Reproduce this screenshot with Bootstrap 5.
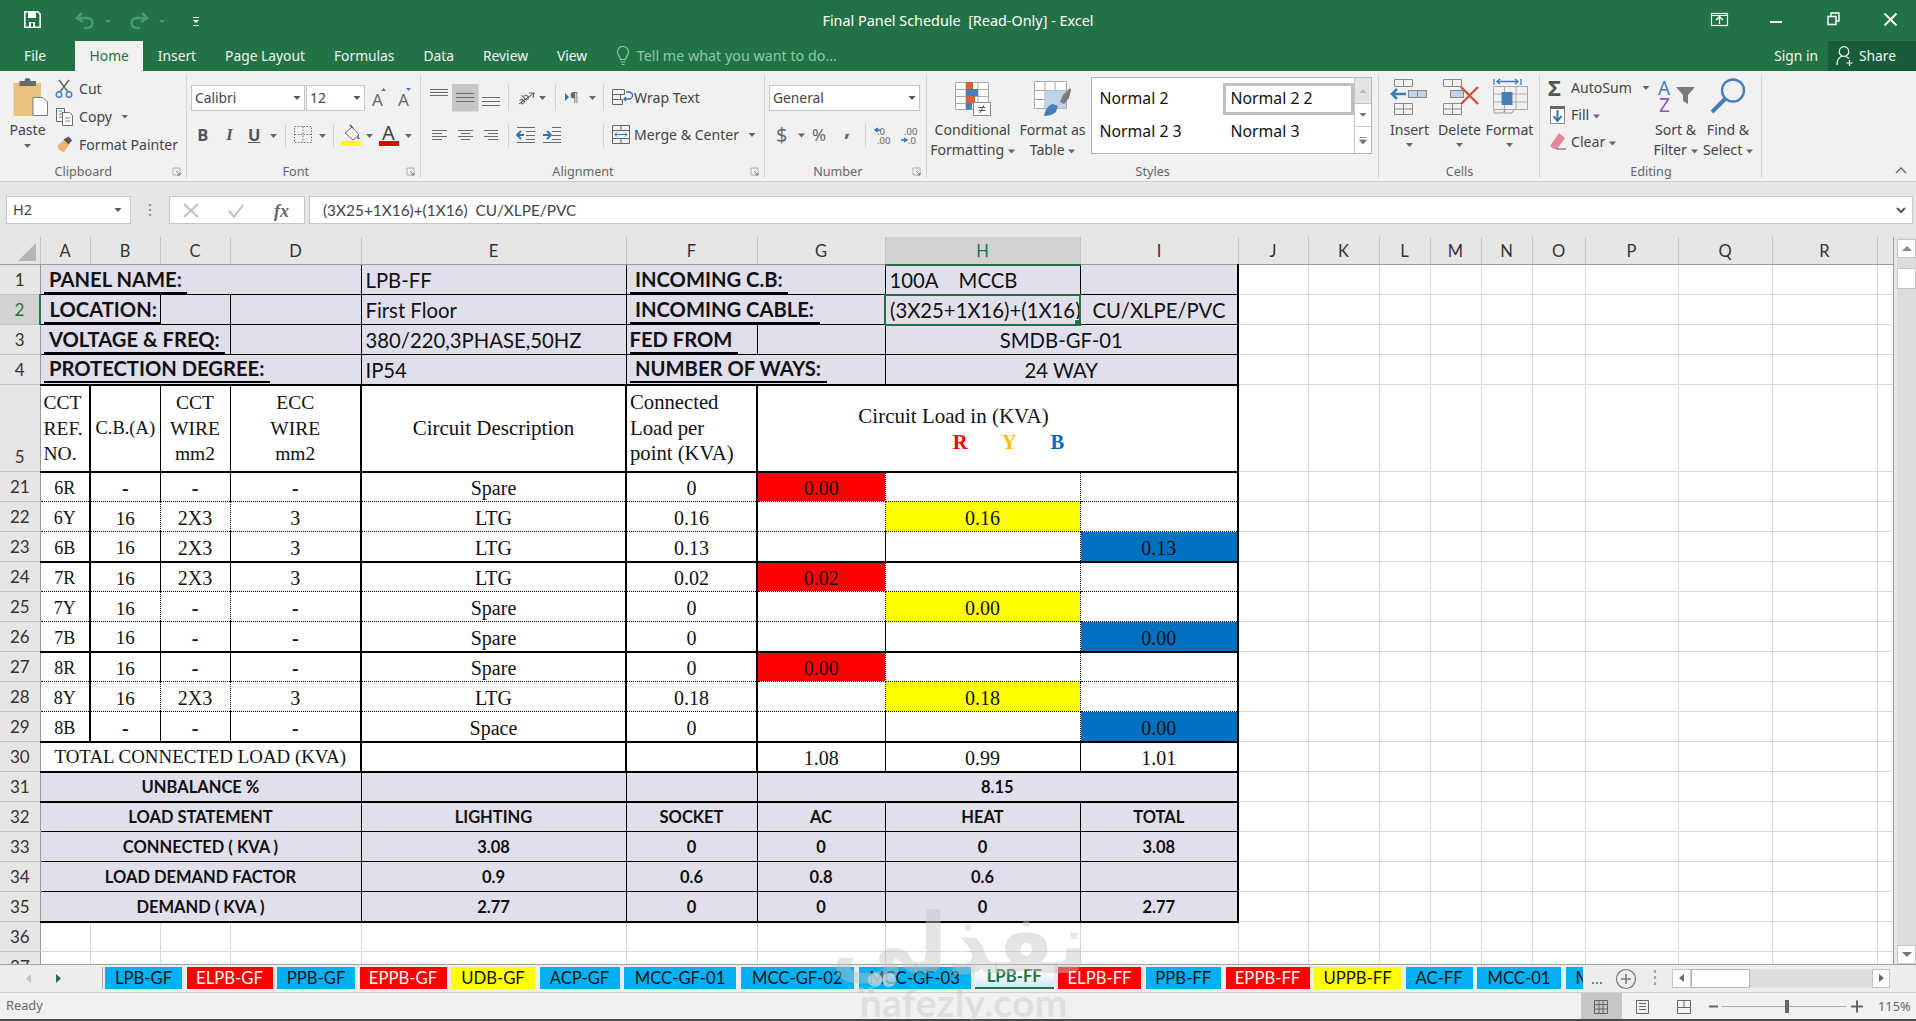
<!DOCTYPE html>
<html lang="en">
<head>
<meta charset="utf-8">
<title>Final Panel Schedule</title>
<link href="https://cdn.jsdelivr.net/npm/bootstrap@5.3.0/dist/css/bootstrap.min.css" rel="stylesheet">
<style>
html,body{height:100%;overflow:hidden;background:#f1f1f1}
body{font-family:"Noto Sans","Open Sans",sans-serif;font-size:14.1px;color:#444;position:relative;width:1916px;height:1021px}
svg{display:block;flex:none}
.xl-title{height:41px;background:#217346;color:#fff;font-size:14.4px}
.xl-side{flex:1 1 0}
.xl-tabs{height:30px;background:#217346;color:#f4f4f4;padding-left:24px;line-height:30px;font-size:13.8px}
.xl-tab{padding:0 14.5px}
.xl-tab.first{padding:0 29px 0 0}
.xl-tab.on{background:#f1f1f1;color:#217346}
.xl-tell{color:#8ec9a7;margin-left:15px;gap:8px;font-size:14.3px}
.xl-signin{margin-right:10px}
.xl-share{background:#185c37;width:88px;height:30px;padding-left:8px;gap:5px;color:#f4f4f4}
.ribbon{height:111px;background:#f1f1f1;border-bottom:1px solid #cfcfcf}
.rgroup{position:relative;height:110px;flex:none}
.rgroup::after{content:"";position:absolute;right:0;top:4px;bottom:3px;width:1px;background:#d4d4d4}
.rbody{height:92px;padding-top:4px}
.rlabel{height:18px;color:#666;font-size:12.6px;line-height:18px}
.rlabel span{flex:1 1 0;text-align:center}
.g1{width:186.5px}.g2{width:234.5px}.g3{width:344px}.g4{width:161.5px}.g5{width:452.5px}.g6{width:161px}.g7{width:222px}
.big{display:flex;flex-direction:column;align-items:center;text-align:center;line-height:20px;flex:none}
.big .pic{height:45px;display:flex;align-items:flex-start;justify-content:center}
.big span{white-space:nowrap}
.srow{height:28px;gap:5px;white-space:nowrap}
.tallrow{height:46px}
.lowrow{height:28px}
.sel-box{height:26px;background:#fff;border:1px solid #c6c6c6;padding:0 3px;font-size:13.8px;color:#444;justify-content:space-between}
.w-font{width:114px}.w-size{width:59px;margin-left:1px}.w-gen{width:151px}
.t-b{font-weight:700;font-size:16.5px;text-align:center;color:#555;font-family:"Open Sans",sans-serif}
.t-b.i{font-style:italic;font-family:"Liberation Serif",serif}
.t-b.u{text-decoration:underline}
.gal{width:281px;height:77px;margin:2px 0 0 0;border:1px solid #b5b5b5;background:#fff;color:#111;font-size:15.8px}
.galgrid{display:grid;grid-template-columns:131px 131px;grid-template-rows:32px 34px;padding-top:5px;width:262px}
.galcell{padding-left:8px;display:flex;align-items:center}
.galcell.act{border:3px solid #bfbfbf;padding-left:5px;background:#fff}
.galbar{width:18px;border-left:1px solid #c6c6c6}
.galbar>div{border-bottom:1px solid #c6c6c6;display:flex;align-items:center;justify-content:center}
.galbar .a{height:26px;background:#e4e4e4}.galbar .b{height:23px}.galbar .c{flex:1;border-bottom:0}
.fbar{height:55px;background:#e6e6e6;padding:14px 3px 13px 6px}
.fname{width:125px;height:28px;background:#fff;border:1px solid #c6c6c6;padding:0 8px 0 6px;justify-content:space-between;font-size:14.5px}
.fbtns{width:136px;height:28px;background:#fff;border:1px solid #c6c6c6;margin:0 4px 0 0}
.finput{flex:1;height:28px;background:#fff;border:1px solid #c6c6c6;padding:0 5px 0 13px;justify-content:space-between;font:400 15.4px Lato,sans-serif;white-space:pre}
.sheetarea{height:727px}
.sheetwrap{width:1894px;height:727px;overflow:hidden;background:#fff;border-right:1px solid #a0a0a0}
.sheet{table-layout:fixed;width:1893px;font-family:"Liberation Serif",serif;color:#111;background:#fff}
.sheet th,.sheet td{padding:0;white-space:nowrap;overflow:hidden;vertical-align:middle;line-height:1;position:relative}
.sheet thead tr{height:27.5px;background:#e6e6e6}
.sheet thead th{background:#e6e6e6;font:400 16.5px Lato,sans-serif;color:#333;text-align:center;border-right:1px solid #c4c4c4;border-bottom:1px solid #9a9a9a;vertical-align:bottom;padding-bottom:3px}
.sheet thead th.hl{background:#d2d2d2;color:#217346;border-bottom:2px solid #217346}
.sheet tbody tr{height:30px}
.sheet tbody tr.r5{height:87px}
.sheet tbody th{background:#e6e6e6;font:400 17px Lato,sans-serif;color:#333;text-align:center;border-right:1px solid #9a9a9a;border-bottom:1px solid #c4c4c4;vertical-align:bottom;padding-bottom:4px}
.sheet tbody th.hl{background:#d2d2d2;color:#217346;border-right:2px solid #217346}
.sheet tbody td:nth-last-child(-n+10){border:1px solid #d6d6d6}
.sheet tbody tr.blank td{border:1px solid #d6d6d6}
.sheet tbody td:not(:nth-last-child(-n+10)){background:transparent}
.lav td:not(:nth-last-child(-n+10)){background:#e1dfeb!important}
.cal td{font-family:Lato,sans-serif;font-size:20.3px;padding:1px 0 0 4px}
.cal td.cn{padding-left:0;text-align:center}
.boldlow td{font:700 16.5px Lato,sans-serif;text-align:center;color:#111;padding-top:1px}
.acct{display:inline-block;font-family:Lato,sans-serif;font-weight:700;font-size:20.2px;line-height:25px;border-bottom:2px solid #000;padding:0 5.5px;margin-left:-1px;color:#111}
.acct.flat{padding-left:0}
.h-ln td:not(:nth-last-child(-n+10)){border-bottom:1px solid #000}
.h-th td:not(:nth-last-child(-n+10)){border-bottom:2px solid #000}
.h-do td:not(:nth-last-child(-n+10)){border-bottom:1px dotted #000}
.tk{border-right:2px solid #000!important}
.vd{border-right:1px dotted #000!important}
.vs{border-right:1px solid #000!important}
.sel{border:2px solid #217346!important}
.handle{position:absolute;right:-1px;bottom:-1px;width:6px;height:6px;background:#217346;border:1px solid #fff}
.hd5 td{font-size:19.5px;line-height:25.5px;white-space:normal;text-align:center;padding:1px 0 0}
.hd5 td.lf{text-align:left;padding-left:3px}
.hd5 td.cd{font-size:21px}
.hd5 td.cb{font-size:18.5px}
.hd5 td.cl{font-size:20.700px}
.loadt{font-size:21px;padding-right:88px;line-height:26px}
.ryb{font-weight:700;font-size:20.5px;line-height:26px;gap:34px;padding-left:22px;color:#0070c0}
.c-r{color:#ff0000}.c-y{color:#ffc000}
.dat td{text-align:center;font-size:20px;padding-top:3px}
.dat td.a{font-size:18px}
.dat td.b{font-size:19px}
.dat td.d{font-weight:700;font-size:20px}
.dat td.tot{font-size:18.900px;padding-top:1px}
.sheet .dat td.f-r{background:#ff0000}.sheet .dat td.f-y{background:#ffff00}.sheet .dat td.f-b{background:#0070c0}
.vscroll{flex:1;background:#dcdcdc;border-left:3px solid #e6e6e6}
.vscroll .bt{height:19px;background:#fff;border:1px solid #c6c6c6;display:flex;align-items:center;justify-content:center}
.vscroll .thumb{height:21px;background:#fff;border:1px solid #c6c6c6;margin-top:10px}
.tabbar{height:29px;background:#ededed;border-top:1px solid #a0a0a0;border-bottom:1px solid #d0d0d0}
.stabs{width:1481px;height:27px;overflow:hidden;gap:4.5px;padding-top:2px;flex:none}
.stab{height:22px;flex:none;text-align:center;font:400 16.7px/22px Lato,sans-serif;color:#111}
.stab.cb{background:#00b0f0}.stab.cr{background:#ff0000;color:#fff}.stab.cy{background:#ffff00}
.stab.act{background:linear-gradient(#fff 30%,#cfe9f6);color:#217346;font-weight:700;border-bottom:2px solid #217346;height:24px;margin-top:-2px}
.stabs>:nth-child(1){width:77px}.stabs>:nth-child(2){width:86px}.stabs>:nth-child(3){width:78px}.stabs>:nth-child(4){width:87px}.stabs>:nth-child(5){width:84px}.stabs>:nth-child(6){width:80px}.stabs>:nth-child(7){width:112px}.stabs>:nth-child(8){width:113.5px}.stabs>:nth-child(9){width:112px}.stabs>:nth-child(10){width:78.5px}.stabs>:nth-child(11){width:83px}.stabs>:nth-child(12){width:75.5px}.stabs>:nth-child(13){width:84px}.stabs>:nth-child(14){width:87px}.stabs>:nth-child(15){width:67px}.stabs>:nth-child(16){width:84px}.stabs>:nth-child(17){width:17px;overflow:hidden;text-align:left;padding-left:10px}
.statusb{height:28px;background:#f1f1f1;border-bottom:2px solid #4a4a4a;padding-left:6px;font-size:12.8px;color:#666;position:relative}
.wm{position:absolute;pointer-events:none;white-space:nowrap;line-height:1}
.wm-ar{left:872px;top:895px;font:700 84px "DejaVu Sans",sans-serif;color:rgba(195,195,195,.45);direction:rtl;width:216px;text-align:center}
.wm-en{left:860px;top:979px;font:700 39px Lato,sans-serif;color:rgba(175,175,175,.28);letter-spacing:.2px}
.wm-dot{top:973px;width:14px;height:14px;border-radius:50%;background:rgba(220,225,230,.65)}
.wm-d1{left:868px}.wm-d2{left:882px}
</style>
</head>
<body>
<header class="xl-title d-flex align-items-center">
  <div class="xl-side">
    <svg width="210" height="41" viewBox="0 0 210 41">
      <path d="M24.8 11.8h13l2.4 2.4v13h-15.4z" fill="none" stroke="#fff" stroke-width="1.6"/>
      <rect x="28" y="12" width="8" height="6" fill="#fff"/><rect x="29" y="22" width="6" height="5" fill="#fff"/><rect x="31" y="23" width="2" height="4" fill="#217346"/>
      <g fill="none" stroke="#4a9a72" stroke-width="2.6"><path d="M82 13l-5 5 6 4"/><path d="M78 18h9a5.5 5 0 0 1 0 10h-3"/><path d="M142 13l5 5-6 4"/><path d="M146 18h-9a5.5 5 0 0 0 0 10h3"/></g>
      <path d="M105 20h6l-3 3zM159 20h6l-3 3z" fill="#4a9a72"/>
      <path d="M193 17h6v1h-6zM193 20h6l-3 3zM193 25h6v1h-6z" fill="#fff"/>
    </svg>
  </div>
  <div>Final Panel Schedule&nbsp; [Read-Only] - Excel</div>
  <div class="xl-side d-flex justify-content-end">
    <svg width="216" height="41" viewBox="1700 0 216 41" fill="none" stroke="#fff">
      <rect x="1711.5" y="13.5" width="16" height="12" stroke-width="1.2"/><path d="M1711 15.5h17" /><path d="M1719.5 24v-7M1716 20l3.5-3.5 3.5 3.5" stroke-width="1.4"/>
      <path d="M1770 22h12" stroke-width="2"/>
      <path d="M1828 16.5h8v8h-8zM1831 16v-3h8v8h-3" stroke-width="1.4"/>
      <path d="M1884.500 13.500l12 12m0-12l-12 12" stroke-width="2"/>
    </svg>
  </div>
</header>
<nav class="xl-tabs d-flex">
  <div class="xl-tab first">File</div><div class="xl-tab on">Home</div><div class="xl-tab">Insert</div><div class="xl-tab">Page Layout</div><div class="xl-tab">Formulas</div><div class="xl-tab">Data</div><div class="xl-tab">Review</div><div class="xl-tab">View</div>
  <div class="xl-tell d-flex align-items-center flex-grow-1">
    <svg width="12" height="20" viewBox="0 0 12 20" fill="none" stroke="#8ec9a7" stroke-width="1.2"><path d="M3.500 13.500c0-3-3-3.500-3-7.500a5.500 5.500 0 0 1 11 0c0 4-3 4.500-3 7.500z"/><path d="M3.500 16h5M4.500 18.500h3"/></svg>
    <span>Tell me what you want to do...</span>
  </div>
  <div class="xl-signin">Sign in</div>
  <div class="xl-share d-flex align-items-center">
    <svg width="18" height="22" viewBox="0 0 18 22" fill="none" stroke="#fff" stroke-width="1.2"><circle cx="8" cy="6.500" r="4.800"/><path d="M1 20c0-5 2.500-8 5-9M10 11.500c1 .4 2 1 3 2"/><path d="M13.500 15v6M10.500 18h6"/></svg>
    <span>Share</span>
  </div>
</nav>

<section class="ribbon d-flex">
  <!-- Clipboard -->
  <div class="rgroup g1">
    <div class="rbody d-flex">
      <div class="big" style="width:55px">
        <div class="pic">
          <svg width="55" height="41" viewBox="0 75 55 41">
            <rect x="13.500" y="83" width="27.500" height="33" fill="#e8c27c"/>
            <path d="M19.500 86v-5h5a3 3 0 0 1 6 0h5.500v5z" fill="#696969"/>
            <path d="M33 97.500h10l4.500 4.500v13.500H33z" fill="#fff" stroke="#7a7a7a"/>
          </svg>
        </div>
        <span>Paste</span>
        <svg width="9" height="10" viewBox="0 0 9 10"><path d="M1 4h7l-3.500 4z" fill="#666"/></svg>
      </div>
      <div class="ms-0">
        <div class="srow d-flex align-items-center">
          <svg width="19" height="20" viewBox="56 78 19 20" fill="none"><path d="M60 79l9 12M70 79l-9 12" stroke="#6a6a6a" stroke-width="1.6"/><circle cx="60" cy="93.500" r="2.800" stroke="#4a7ebb" stroke-width="1.400"/><circle cx="70" cy="93.500" r="2.800" stroke="#4a7ebb" stroke-width="1.400"/></svg>
          <span>Cut</span>
        </div>
        <div class="srow d-flex align-items-center">
          <svg width="19" height="20" viewBox="56 107 19 20" fill="none" stroke="#6a6a6a"><path d="M57.500 108.500h8v13h-8z" fill="#fff"/><path d="M60 111h3M60 114h3M60 117h3" stroke="#4a7ebb"/><path d="M63.500 112.500h7l3 3v10h-10z" fill="#fff"/><path d="M66 118h5M66 121h5" stroke="#888"/></svg>
          <span>Copy</span>
          <svg width="8" height="6" viewBox="0 0 8 6" class="ms-1"><path d="M.5 1h6.500l-3.250 3.500z" fill="#666"/></svg>
        </div>
        <div class="srow d-flex align-items-center">
          <svg width="19" height="20" viewBox="56 135 19 20"><path d="M59 145l6-5 5 5-5 7c-3 0-7-3-6-7z" fill="#e8b76a"/><path d="M64.500 139.500l5-3 3.500 4-3.500 4z" fill="#555"/></svg>
          <span>Format Painter</span>
        </div>
      </div>
    </div>
    <div class="rlabel d-flex"><span>Clipboard</span><svg width="20" height="18" viewBox="0 0 20 18" fill="none" stroke="#777" stroke-width=".9"><path d="M6 5h7v7h-7z" stroke="#aaa"/><path d="M9 8l4 4M10.500 12H13v-2.500"/></svg></div>
  </div>
  <!-- Font -->
  <div class="rgroup g2 ps-1">
    <div class="rbody" style="padding-left:.5px">
      <div class="tallrow d-flex align-items-center">
        <div class="sel-box d-flex align-items-center w-font"><span>Calibri</span><svg width="8" height="6" viewBox="0 0 8 6"><path d="M.5 1h7l-3.500 4z" fill="#555"/></svg></div>
        <div class="sel-box d-flex align-items-center w-size"><span>12</span><svg width="8" height="6" viewBox="0 0 8 6"><path d="M.5 1h7l-3.500 4z" fill="#555"/></svg></div>
        <svg width="52" height="26" viewBox="365 85 52 26"><text x="372" y="106" font-family="Noto Sans" font-size="17" fill="#666">A</text><path d="M381 91l2.500-3 2.500 3z" fill="#4a7ebb"/><text x="398" y="106" font-family="Noto Sans" font-size="17" fill="#666">A</text><path d="M406 88l2.500 3 2.500-3z" fill="#4a7ebb"/></svg>
      </div>
      <div class="lowrow d-flex align-items-center">
        <div class="t-b" style="width:24px">B</div><div class="t-b i" style="width:30px">I</div><div class="t-b u" style="width:20px">U</div>
        <svg width="77" height="28" viewBox="265 121 77 28" fill="none"><path d="M271 134h7l-3.500 4z" fill="#666"/><path d="M286.500 124v23" stroke="#d0d0d0"/><path d="M295.500 126.500h17v16h-17zM304 126.500v16M295.500 134.500h17" stroke="#777" stroke-dasharray="1.500 1.500"/><path d="M320 134h7l-3.500 4z" fill="#666"/><path d="M334.500 124v23" stroke="#d0d0d0"/></svg>
        <svg width="80" height="28" viewBox="342 121 80 28" fill="none"><path d="M346 133l7-6 7 8-6 5z" fill="#fff" stroke="#666"/><path d="M351 125l3 3" stroke="#555" stroke-width="1.500"/><path d="M359 135l2 4h-3z" fill="#4a7ebb"/><rect x="342" y="141" width="20" height="5" fill="#ffff00"/><path d="M367 134h7l-3.500 4z" fill="#666"/><text x="383" y="140" font-family="Noto Sans" font-size="20" fill="#444">A</text><rect x="380" y="141" width="20" height="5" fill="#e00000"/><path d="M406 134h7l-3.500 4z" fill="#666"/></svg>
      </div>
    </div>
    <div class="rlabel d-flex"><span>Font</span><svg width="20" height="18" viewBox="0 0 20 18" fill="none" stroke="#777" stroke-width=".9"><path d="M6 5h7v7h-7z" stroke="#aaa"/><path d="M9 8l4 4M10.500 12H13v-2.500"/></svg></div>
  </div>
  <!-- Alignment -->
  <div class="rgroup g3">
    <div class="rbody">
      <div class="tallrow d-flex align-items-center">
        <svg width="190" height="28" viewBox="421 85 190 28" fill="none" stroke="#6a6a6a">
          <rect x="452" y="85" width="26.500" height="27.500" fill="#c6c6c6" stroke="none"/>
          <path d="M430 90.500h18M430 93.500h18M430 96.500h18M456 94.500h18M456 98.500h18M456 102.500h18M482 98.500h18M482 102.500h18M482 106.500h18"/>
          <path d="M508.500 85v27M555.500 85v27M603.500 85v27" stroke="#d0d0d0"/>
          <text transform="rotate(-45 524 100)" x="518" y="103" font-family="Noto Sans" font-size="10" fill="#555" stroke="none">ab</text><path d="M519 105l15-11M534 94l-5 0M534 94l-1 5" stroke="#555"/>
          <path d="M539 97h7l-3.500 4z" fill="#666" stroke="none"/>
          <path d="M565 94v8l4-4z" fill="#2e75b6" stroke="none"/><text x="570" y="103" font-family="Noto Sans" font-size="13" fill="#666" stroke="none">¶</text>
          <path d="M589 97h7l-3.500 4z" fill="#666" stroke="none"/>
        </svg>
        <svg width="23" height="22" viewBox="611 88 23 22" fill="none"><path d="M612.500 90.500h12v5h-12zM612.500 95.500h8v5h-8zM612.500 100.500h10v5h-10z" stroke="#666"/><path d="M626 93h3a3 3 0 0 1 0 7h-5M626 98l-2 2 2 2" stroke="#2e75b6" stroke-width="1.300"/></svg>
        <span>Wrap Text</span>
      </div>
      <div class="lowrow d-flex align-items-center">
        <svg width="190" height="28" viewBox="421 121 190 28" fill="none" stroke="#6a6a6a">
          <path d="M432 130.500h15M432 133.500h10M432 136.500h15M432 139.500h10M458 130.500h15M461 133.500h9M458 136.500h15M461 139.500h9M484 130.500h14M488 133.500h10M484 136.500h14M488 139.500h10"/>
          <path d="M508.500 124v23M603.500 124v23" stroke="#d0d0d0"/>
          <path d="M526 127.500h9M526 131.500h9M526 135.500h9M526 139.500h9M517 142.500h18M517 127.500h18M552 127.500h9M552 131.500h9M552 135.500h9M552 139.500h9M543 142.500h18"/>
          <path d="M524 135h-7M521 131l-4 4 4 4M543 135h7M547 131l4 4-4 4" stroke="#2e75b6" stroke-width="1.800"/>
        </svg>
        <svg width="23" height="24" viewBox="611 123 23 24" fill="none" stroke="#666"><path d="M612.500 125.500h17v18h-17zM612.500 130.500h17M612.500 138.500h17M621 125.500v5M621 138.500v5"/><path d="M615 134.500h12M617 132.500l-2 2 2 2M625 132.500l2 2-2 2" stroke="#2e75b6"/></svg>
        <span>Merge &amp; Center</span>
        <svg width="8" height="6" viewBox="0 0 8 6" style="margin-left:9px"><path d="M.5 1h7l-3.500 4z" fill="#666"/></svg>
      </div>
    </div>
    <div class="rlabel d-flex"><span>Alignment</span><svg width="20" height="18" viewBox="0 0 20 18" fill="none" stroke="#777" stroke-width=".9"><path d="M6 5h7v7h-7z" stroke="#aaa"/><path d="M9 8l4 4M10.500 12H13v-2.500"/></svg></div>
  </div>
  <!-- Number -->
  <div class="rgroup g4 ps-1">
    <div class="rbody">
      <div class="tallrow d-flex align-items-center">
        <div class="sel-box d-flex align-items-center w-gen"><span>General</span><svg width="8" height="6" viewBox="0 0 8 6"><path d="M.5 1h7l-3.500 4z" fill="#555"/></svg></div>
      </div>
      <div class="lowrow d-flex align-items-center">
        <svg width="155" height="28" viewBox="769 121 155 28" fill="none">
          <text x="776" y="142" font-family="Noto Sans" font-size="20" fill="#666">$</text>
          <path d="M798 133.500h7l-3.500 4z" fill="#666"/>
          <text x="812" y="141" font-family="Noto Sans" font-size="17" fill="#666">%</text>
          <text x="844" y="136" font-family="Noto Sans" font-size="22" font-weight="700" fill="#666">,</text>
          <path d="M865.500 124v23" stroke="#d0d0d0"/>
          <text x="877" y="135" font-family="Noto Sans" font-size="9.500" fill="#666">.0</text><text x="877" y="144" font-family="Noto Sans" font-size="9.500" fill="#666">.00</text>
          <path d="M881 130h-5M878 128l-3 2 3 2" stroke="#2e75b6" stroke-width="1.500"/>
          <text x="904" y="135" font-family="Noto Sans" font-size="9.500" fill="#666">.00</text><text x="908" y="144" font-family="Noto Sans" font-size="9.500" fill="#666">.0</text>
          <path d="M901 140h5M904 138l3 2-3 2" stroke="#2e75b6" stroke-width="1.500"/>
        </svg>
      </div>
    </div>
    <div class="rlabel d-flex"><span>Number</span><svg width="20" height="18" viewBox="0 0 20 18" fill="none" stroke="#777" stroke-width=".9"><path d="M6 5h7v7h-7z" stroke="#aaa"/><path d="M9 8l4 4M10.500 12H13v-2.500"/></svg></div>
  </div>
  <!-- Styles -->
  <div class="rgroup g5">
    <div class="rbody d-flex">
      <div class="big" style="width:84px;margin-left:4px">
        <div class="pic">
          <svg width="44" height="41" viewBox="954 76 44 41">
            <path d="M958.500 83.500h33v27h-33zM969 83.500v27M981 83.500v27M958.500 90.500h33M958.500 97.500h33M958.500 104.500h33" fill="#fff" stroke="#a8a8a8"/>
            <rect x="969" y="83" width="7" height="7" fill="#d9603b"/><rect x="969" y="90" width="12" height="7" fill="#4a7ebb"/><rect x="969" y="97" width="9" height="7" fill="#d9603b"/><rect x="969" y="104" width="6" height="6.500" fill="#4a7ebb"/>
            <path d="M976.500 103.500h17v13h-17z" fill="#fff" stroke="#888"/><path d="M981.500 108.500h7M981.500 111.500h7M987 106l-4 8" stroke="#555"/>
          </svg>
        </div>
        <span>Conditional</span>
        <span>Formatting <svg class="d-inline" width="7" height="5" viewBox="0 0 7 5"><path d="M0 .5h7l-3.500 4z" fill="#666"/></svg></span>
      </div>
      <div class="big" style="width:76px">
        <div class="pic">
          <svg width="44" height="41" viewBox="1034 76 44 41">
            <path d="M1037.500 82.500h32v27h-32zM1048 82.500v27M1058 82.500v27M1037.500 91.500h32M1037.500 100.500h32" fill="#fff" stroke="#a8a8a8"/>
            <rect x="1048" y="91.500" width="21" height="18" fill="#bed3e8"/>
            <path d="M1066 96l7-7 1 2-2 8-5 6-4-2z" fill="#7a7a7a"/><path d="M1047 117c1-6 4-11 9-12l5 2-2 6c-4 3-8 4-12 4z" fill="#4a7ebb"/>
          </svg>
        </div>
        <span>Format as</span>
        <span>Table <svg class="d-inline" width="7" height="5" viewBox="0 0 7 5"><path d="M0 .5h7l-3.500 4z" fill="#666"/></svg></span>
      </div>
      <div class="gal d-flex">
        <div class="galgrid">
          <div class="galcell">Normal 2</div><div class="galcell act">Normal 2 2</div>
          <div class="galcell">Normal 2 3</div><div class="galcell">Normal 3</div>
        </div>
        <div class="galbar d-flex flex-column">
          <div class="a"><svg width="8" height="6" viewBox="0 0 8 6"><path d="M.5 5h7L4 1z" fill="#b5b5b5"/></svg></div>
          <div class="b"><svg width="8" height="6" viewBox="0 0 8 6"><path d="M.5 1h7L4 5z" fill="#777"/></svg></div>
          <div class="c"><svg width="8" height="9" viewBox="0 0 8 9"><path d="M.5 1.500h7M.5 4h7L4 8z" stroke="#777" stroke-width=".8" fill="#777"/></svg></div>
        </div>
      </div>
    </div>
    <div class="rlabel d-flex"><span>Styles</span></div>
  </div>
  <!-- Cells -->
  <div class="rgroup g6">
    <div class="rbody d-flex justify-content-center">
      <div class="big" style="width:50px">
        <div class="pic">
          <svg width="44" height="41" viewBox="1387 76 44 41" fill="none" stroke="#888">
            <path d="M1393.500 80.500h18v7h-18zM1402.500 80.500v7M1393.500 104.500h18v11h-18zM1402.500 104.500v11M1393.500 110h18"/>
            <rect x="1407.500" y="91.500" width="18" height="7" fill="#bed3e8"/><path d="M1416.500 91.500v7"/>
            <path d="M1405 95h-14M1396 90l-5 5 5 5" stroke="#3f7cb8" stroke-width="2.600"/>
          </svg>
        </div>
        <span>Insert</span>
        <svg width="9" height="10" viewBox="0 0 9 10" class="mt-0"><path d="M1 3h7l-3.500 4z" fill="#666"/></svg>
      </div>
      <div class="big" style="width:50px">
        <div class="pic">
          <svg width="44" height="41" viewBox="1438 76 44 41" fill="none" stroke="#888">
            <path d="M1443.500 80.500h18v7h-18zM1452.500 80.500v7M1443.500 104.500h18v11h-18zM1452.500 104.500v11M1443.500 110h18"/>
            <rect x="1450.500" y="91.500" width="13" height="7" fill="#bed3e8"/>
            <path d="M1461 88l17 17M1478 88l-17 17" stroke="#d35230" stroke-width="2.400"/>
          </svg>
        </div>
        <span>Delete</span>
        <svg width="9" height="10" viewBox="0 0 9 10"><path d="M1 3h7l-3.500 4z" fill="#666"/></svg>
      </div>
      <div class="big" style="width:50px">
        <div class="pic">
          <svg width="44" height="41" viewBox="1488 76 44 41" fill="none" stroke="#aaa">
            <path d="M1493.500 87.500h34v23h-34zM1504.500 87.500v23M1516 87.500v23M1493.500 95h34M1493.500 103h34"/>
            <rect x="1501.500" y="93" width="11" height="13" fill="#4a7ebb" stroke="none"/>
            <path d="M1494 80v6M1521 80v6M1497 82.500h21M1500 80l-3 2.500 3 2.500M1515 80l3 2.500-3 2.500" stroke="#3f7cb8" stroke-width="1.300"/>
            <path d="M1494 111v3h9l2-3M1505 111l-1 3h8l2-3" stroke="#999"/>
          </svg>
        </div>
        <span>Format</span>
        <svg width="9" height="10" viewBox="0 0 9 10"><path d="M1 3h7l-3.500 4z" fill="#666"/></svg>
      </div>
    </div>
    <div class="rlabel d-flex"><span>Cells</span></div>
  </div>
  <!-- Editing -->
  <div class="rgroup g7">
    <div class="rbody d-flex">
      <div style="width:109px;padding-left:8px">
        <div class="d-flex align-items-center srow" style="height:26px">
          <svg width="18" height="20" viewBox="1548 78 18 20"><text x="1548" y="96" font-family="Noto Sans" font-size="22" font-weight="700" fill="#555">Σ</text></svg>
          <span>AutoSum</span><svg width="8" height="6" viewBox="0 0 8 6" style="margin-left:5px"><path d="M.5 1h7l-3.500 4z" fill="#666"/></svg>
        </div>
        <div class="d-flex align-items-center srow" style="height:27px">
          <svg width="18" height="20" viewBox="1548 104 18 20" fill="none"><path d="M1550.500 105.500h14v17h-14z" fill="#fff" stroke="#888"/><rect x="1550" y="105" width="15" height="3" fill="#666"/><path d="M1557.500 109v11M1553.500 115l4 5 4-5" stroke="#2e75b6" stroke-width="2"/></svg>
          <span>Fill <svg class="d-inline" width="7" height="5" viewBox="0 0 7 5"><path d="M0 .5h7l-3.500 4z" fill="#666"/></svg></span>
        </div>
        <div class="d-flex align-items-center srow" style="height:27px">
          <svg width="18" height="20" viewBox="1548 132 18 20" fill="none"><path d="M1550 146l9-13 6 5-8 11h-3z" fill="#e8849c"/><path d="M1556 149h10" stroke="#555"/></svg>
          <span>Clear <svg class="d-inline" width="7" height="5" viewBox="0 0 7 5"><path d="M0 .5h7l-3.500 4z" fill="#666"/></svg></span>
        </div>
      </div>
      <div class="big" style="width:53px">
        <div class="pic">
          <svg width="44" height="41" viewBox="1655 76 44 41">
            <text x="1659" y="96" font-family="Noto Sans" font-size="19" fill="#4a7ebb">A</text><text x="1660" y="113" font-family="Noto Sans" font-size="19" fill="#8a55b5">Z</text>
            <path d="M1677 88h19l-7 8v9l-5-3v-6z" fill="#7a7a7a"/>
          </svg>
        </div>
        <span>Sort &amp;</span>
        <span>Filter <svg class="d-inline" width="7" height="5" viewBox="0 0 7 5"><path d="M0 .5h7l-3.500 4z" fill="#666"/></svg></span>
      </div>
      <div class="big" style="width:52px">
        <div class="pic">
          <svg width="44" height="41" viewBox="1708 76 44 41" fill="none" stroke="#4a7ebb"><circle cx="1735" cy="91.500" r="11" stroke-width="2.400"/><path d="M1727 100l-13 13" stroke-width="4"/></svg>
        </div>
        <span>Find &amp;</span>
        <span>Select <svg class="d-inline" width="7" height="5" viewBox="0 0 7 5"><path d="M0 .5h7l-3.500 4z" fill="#666"/></svg></span>
      </div>
    </div>
    <div class="rlabel d-flex"><span>Editing</span></div>
  </div>
  <div class="flex-grow-1 d-flex align-items-end justify-content-end pb-1 pe-1">
    <svg width="24" height="14" viewBox="0 0 24 14" fill="none" stroke="#666" stroke-width="1.400"><path d="M8 10l5-5 5 5"/></svg>
  </div>
</section>

<div class="fbar d-flex">
  <div class="fname d-flex align-items-center"><span>H2</span><svg width="8" height="6" viewBox="0 0 8 6"><path d="M.5 1h7l-3.500 4z" fill="#555"/></svg></div>
  <svg width="38" height="28" viewBox="131 196 38 28"><path d="M150 204v2M150 209v2M150 214v2" stroke="#9a9a9a" stroke-width="2.400"/></svg>
  <div class="fbtns d-flex align-items-center">
    <svg width="134" height="26" viewBox="170 197 134 26" fill="none"><path d="M184 204l14 13m0-13l-14 13" stroke="#c0c0c0" stroke-width="2"/><path d="M229 211l5 6 9-12" stroke="#c0c0c0" stroke-width="2"/><text x="274" y="217" font-family="Liberation Serif" font-style="italic" font-weight="700" font-size="18" fill="#666">fx</text></svg>
  </div>
  <div class="finput d-flex align-items-center"><span>(3X25+1X16)+(1X16)  CU/XLPE/PVC</span><svg width="12" height="8" viewBox="0 0 12 8" fill="none" stroke="#555" stroke-width="2"><path d="M2 2l4 4 4-4"/></svg></div>
</div>

<main class="sheetarea d-flex">
  <div class="sheetwrap">
    <table class="sheet">
      <colgroup>
        <col style="width:40px"><col style="width:50px"><col style="width:70px"><col style="width:70px"><col style="width:131px"><col style="width:265px"><col style="width:131px"><col style="width:128px"><col style="width:195px"><col style="width:158px"><col style="width:70px"><col style="width:71px"><col style="width:51px"><col style="width:51px"><col style="width:51px"><col style="width:53px"><col style="width:93px"><col style="width:94px"><col style="width:105px"><col style="width:16px">
      </colgroup>
      <thead>
        <tr><th><svg width="18" height="18" viewBox="0 0 18 18" class="ms-auto me-1"><path d="M18 0v18H0z" fill="#b4b4b4"/></svg></th><th>A</th><th>B</th><th>C</th><th>D</th><th>E</th><th>F</th><th>G</th><th class="hl">H</th><th>I</th><th>J</th><th>K</th><th>L</th><th>M</th><th>N</th><th>O</th><th>P</th><th>Q</th><th>R</th><th></th></tr>
      </thead>
      <tbody>
        <tr class="lav cal h-ln"><th>1</th><td colspan="4" class="vs"><span class="acct">PANEL NAME:</span></td><td class="vs">LPB-FF</td><td colspan="2" class="vs"><span class="acct">INCOMING C.B:</span></td><td class="vs" style="border-top:2px solid #217346">100A&nbsp;&nbsp;&nbsp; MCCB</td><td class="tk"></td><td></td><td></td><td></td><td></td><td></td><td></td><td></td><td></td><td></td><td></td></tr>
        <tr class="lav cal h-ln"><th class="hl">2</th><td colspan="2" class="vs"><span class="acct">LOCATION:</span></td><td class="vs"></td><td class="vs"></td><td class="vs">First Floor</td><td colspan="2" class="vs"><span class="acct">INCOMING CABLE:</span></td><td class="sel">(3X25+1X16)+(1X16)<span class="handle"></span></td><td class="tk cn">CU/XLPE/PVC</td><td></td><td></td><td></td><td></td><td></td><td></td><td></td><td></td><td></td><td></td></tr>
        <tr class="lav cal h-ln"><th>3</th><td colspan="3" class="vs"><span class="acct">VOLTAGE &amp; FREQ:</span></td><td class="vs"></td><td class="vs">380/220,3PHASE,50HZ</td><td class="vs"><span class="acct flat">FED FROM</span></td><td class="vs"></td><td colspan="2" class="tk cn">SMDB-GF-01</td><td></td><td></td><td></td><td></td><td></td><td></td><td></td><td></td><td></td><td></td></tr>
        <tr class="lav cal h-th"><th>4</th><td colspan="4" class="vs"><span class="acct">PROTECTION DEGREE:</span></td><td class="vs">IP54</td><td colspan="2" class="vs"><span class="acct">NUMBER OF WAYS:</span></td><td colspan="2" class="tk cn">24 WAY</td><td></td><td></td><td></td><td></td><td></td><td></td><td></td><td></td><td></td><td></td></tr>
        <tr class="r5 hd5 h-th"><th>5</th><td class="tk lf">CCT<br>REF.<br>NO.</td><td class="vs cb">C.B.(A)</td><td class="vs">CCT<br>WIRE<br>mm2</td><td class="tk">ECC<br>WIRE<br>mm2</td><td class="tk cd">Circuit Description</td><td class="tk lf cl">Connected<br>Load per<br>point (KVA)</td><td colspan="3" class="tk"><div class="loadt">Circuit Load in (KVA)</div><div class="ryb d-flex justify-content-center"><span class="c-r">R</span><span class="c-y">Y</span><span>B</span></div></td><td></td><td></td><td></td><td></td><td></td><td></td><td></td><td></td><td></td><td></td></tr>
        <tr class="dat h-do"><th>21</th><td class="a tk">6R</td><td class="d vs">-</td><td class="d vs">-</td><td class="d tk">-</td><td class="tk">Spare</td><td class="tk">0</td><td class="f-r vd">0.00</td><td class="vd"></td><td class="tk"></td><td></td><td></td><td></td><td></td><td></td><td></td><td></td><td></td><td></td><td></td></tr>
        <tr class="dat h-do"><th>22</th><td class="a tk">6Y</td><td class="b vd">16</td><td class="vd">2X3</td><td class="tk">3</td><td class="tk">LTG</td><td class="tk">0.16</td><td class="vd"></td><td class="f-y vd">0.16</td><td class="tk"></td><td></td><td></td><td></td><td></td><td></td><td></td><td></td><td></td><td></td><td></td></tr>
        <tr class="dat h-th"><th>23</th><td class="a tk">6B</td><td class="b vs">16</td><td class="vs">2X3</td><td class="tk">3</td><td class="tk">LTG</td><td class="tk">0.13</td><td class="vs"></td><td class="vd"></td><td class="f-b tk">0.13</td><td></td><td></td><td></td><td></td><td></td><td></td><td></td><td></td><td></td><td></td></tr>
        <tr class="dat h-do"><th>24</th><td class="a tk">7R</td><td class="b vs">16</td><td class="vs">2X3</td><td class="tk">3</td><td class="tk">LTG</td><td class="tk">0.02</td><td class="f-r vd">0.02</td><td class="vd"></td><td class="tk"></td><td></td><td></td><td></td><td></td><td></td><td></td><td></td><td></td><td></td><td></td></tr>
        <tr class="dat h-do"><th>25</th><td class="a tk">7Y</td><td class="b vd">16</td><td class="d vd">-</td><td class="d tk">-</td><td class="tk">Spare</td><td class="tk">0</td><td class="vd"></td><td class="f-y vd">0.00</td><td class="tk"></td><td></td><td></td><td></td><td></td><td></td><td></td><td></td><td></td><td></td><td></td></tr>
        <tr class="dat h-th"><th>26</th><td class="a tk">7B</td><td class="b vs">16</td><td class="d vs">-</td><td class="d tk">-</td><td class="tk">Spare</td><td class="tk">0</td><td class="vs"></td><td class="vd"></td><td class="f-b tk">0.00</td><td></td><td></td><td></td><td></td><td></td><td></td><td></td><td></td><td></td><td></td></tr>
        <tr class="dat h-do"><th>27</th><td class="a tk">8R</td><td class="b vs">16</td><td class="d vs">-</td><td class="d tk">-</td><td class="tk">Spare</td><td class="tk">0</td><td class="f-r vd">0.00</td><td class="vd"></td><td class="tk"></td><td></td><td></td><td></td><td></td><td></td><td></td><td></td><td></td><td></td><td></td></tr>
        <tr class="dat h-do"><th>28</th><td class="a tk">8Y</td><td class="b vd">16</td><td class="vd">2X3</td><td class="tk">3</td><td class="tk">LTG</td><td class="tk">0.18</td><td class="vd"></td><td class="f-y vd">0.18</td><td class="tk"></td><td></td><td></td><td></td><td></td><td></td><td></td><td></td><td></td><td></td><td></td></tr>
        <tr class="dat h-th"><th>29</th><td class="a tk">8B</td><td class="d vs">-</td><td class="d vs">-</td><td class="d tk">-</td><td class="tk">Space</td><td class="tk">0</td><td class="vs"></td><td class="vd"></td><td class="f-b tk">0.00</td><td></td><td></td><td></td><td></td><td></td><td></td><td></td><td></td><td></td><td></td></tr>
        <tr class="dat h-th"><th>30</th><td colspan="4" class="tk tot">TOTAL CONNECTED LOAD (KVA)</td><td class="tk"></td><td class="tk"></td><td class="vs">1.08</td><td class="vs">0.99</td><td class="tk">1.01</td><td></td><td></td><td></td><td></td><td></td><td></td><td></td><td></td><td></td><td></td></tr>
        <tr class="lav boldlow h-th"><th>31</th><td colspan="4" class="vs">UNBALANCE %</td><td class="vs"></td><td class="vs"></td><td colspan="3" class="tk">8.15</td><td></td><td></td><td></td><td></td><td></td><td></td><td></td><td></td><td></td><td></td></tr>
        <tr class="lav boldlow h-ln"><th>32</th><td colspan="4" class="vs">LOAD STATEMENT</td><td class="vs">LIGHTING</td><td class="vs">SOCKET</td><td class="vs">AC</td><td class="vs">HEAT</td><td class="tk">TOTAL</td><td></td><td></td><td></td><td></td><td></td><td></td><td></td><td></td><td></td><td></td></tr>
        <tr class="lav boldlow h-ln"><th>33</th><td colspan="4" class="vs">CONNECTED ( KVA )</td><td class="vs">3.08</td><td class="vs">0</td><td class="vs">0</td><td class="vs">0</td><td class="tk">3.08</td><td></td><td></td><td></td><td></td><td></td><td></td><td></td><td></td><td></td><td></td></tr>
        <tr class="lav boldlow h-ln"><th>34</th><td colspan="4" class="vs">LOAD DEMAND FACTOR</td><td class="vs">0.9</td><td class="vs">0.6</td><td class="vs">0.8</td><td class="vs">0.6</td><td class="tk"></td><td></td><td></td><td></td><td></td><td></td><td></td><td></td><td></td><td></td><td></td></tr>
        <tr class="lav boldlow h-th"><th>35</th><td colspan="4" class="vs">DEMAND ( KVA )</td><td class="vs">2.77</td><td class="vs">0</td><td class="vs">0</td><td class="vs">0</td><td class="tk">2.77</td><td></td><td></td><td></td><td></td><td></td><td></td><td></td><td></td><td></td><td></td></tr>
        <tr class="blank"><th>36</th><td></td><td></td><td></td><td></td><td></td><td></td><td></td><td></td><td></td><td></td><td></td><td></td><td></td><td></td><td></td><td></td><td></td><td></td><td></td></tr>
        <tr class="blank"><th>37</th><td></td><td></td><td></td><td></td><td></td><td></td><td></td><td></td><td></td><td></td><td></td><td></td><td></td><td></td><td></td><td></td><td></td><td></td><td></td></tr>
      </tbody>
    </table>
  </div>
  <div class="vscroll d-flex flex-column">
    <div class="bt mt-1" style="margin-top:2px!important"><svg width="12" height="7" viewBox="0 0 12 7"><path d="M1 6h10L6 1z" fill="#888"/></svg></div>
    <div class="thumb"></div>
    <div class="flex-grow-1"></div>
    <div class="bt mb-0"><svg width="12" height="7" viewBox="0 0 12 7"><path d="M1 1h10L6 6z" fill="#777"/></svg></div>
  </div>
</main>

<div class="tabbar d-flex">
  <svg width="105" height="27" viewBox="0 0 105 27"><path d="M31 9v9l-5-4.500z" fill="#c4c4c4"/><path d="M56 9v9l5-4.500z" fill="#217346"/><path d="M102.500 2v22" stroke="#b0b0b0"/></svg>
  <div class="stabs d-flex">
    <div class="stab cb">LPB-GF</div><div class="stab cr">ELPB-GF</div><div class="stab cb">PPB-GF</div><div class="stab cr">EPPB-GF</div><div class="stab cy">UDB-GF</div><div class="stab cb">ACP-GF</div><div class="stab cb">MCC-GF-01</div><div class="stab cb">MCC-GF-02</div><div class="stab cb">MCC-GF-03</div><div class="stab act">LPB-FF</div><div class="stab cr">ELPB-FF</div><div class="stab cb">PPB-FF</div><div class="stab cr">EPPB-FF</div><div class="stab cy">UPPB-FF</div><div class="stab cb">AC-FF</div><div class="stab cb">MCC-01</div><div class="stab cb">MCC</div>
  </div>
  <svg width="330" height="27" viewBox="1586 965 330 27" fill="none">
    <path d="M1592 983h2M1596 983h2M1600 983h2" stroke="#217346" stroke-width="1.500"/>
    <circle cx="1626" cy="979" r="9.500" stroke="#777" stroke-width="1.200"/><path d="M1621 979h10M1626 974v10" stroke="#777" stroke-width="1.600"/>
    <path d="M1655 970v3M1655 976v3M1655 982v3" stroke="#a8a8a8" stroke-width="2.200"/>
    <rect x="1672.500" y="969.500" width="217" height="18" fill="#dcdcdc"/>
    <rect x="1672.500" y="969.500" width="18" height="18" fill="#fff" stroke="#c6c6c6"/><path d="M1684 974v8l-5-4z" fill="#666"/>
    <rect x="1691.500" y="969.500" width="58" height="18" fill="#fff" stroke="#b5b5b5"/>
    <rect x="1872.500" y="969.500" width="17" height="18" fill="#fff" stroke="#c6c6c6"/><path d="M1879 974v8l5-4z" fill="#666"/>
  </svg>
</div>

<footer class="statusb d-flex align-items-center">
  <span>Ready</span>
  <svg class="ms-auto" width="335" height="26" viewBox="1581 993 335 26" fill="none">
    <rect x="1581" y="993" width="41" height="26" fill="#c6c6c6"/>
    <path d="M1594.500 1000.500h13v13h-13zM1594.500 1004.500h13M1594.500 1009h13M1599 1000.500v13M1603 1000.500v13" stroke="#666"/>
    <path d="M1636.500 1000.500h12v13h-12zM1639 1003.500h7M1639 1006.500h7M1639 1009.500h7" stroke="#666"/>
    <path d="M1677.500 1000.500h13v13h-13zM1684 1000.500v7h-6.500M1684 1007.500h6.500" stroke="#666"/>
    <path d="M1709 1006.500h9" stroke="#666" stroke-width="2"/><path d="M1722 1006.500h124" stroke="#a8a8a8"/><rect x="1785" y="1000" width="4" height="13" fill="#666"/><path d="M1851 1006.500h12M1857 1000.500v12" stroke="#666" stroke-width="2"/>
    <text x="1878" y="1011" font-family="Noto Sans" font-size="12.800" fill="#666">115%</text>
  </svg>
</footer>

<div class="wm wm-ar">نفذلي</div>
<div class="wm wm-en">nafezly.com</div>
<div class="wm wm-dot wm-d1"></div><div class="wm wm-dot wm-d2"></div>
<script src="https://cdn.jsdelivr.net/npm/bootstrap@5.3.0/dist/js/bootstrap.bundle.min.js"></script>
</body>
</html>
